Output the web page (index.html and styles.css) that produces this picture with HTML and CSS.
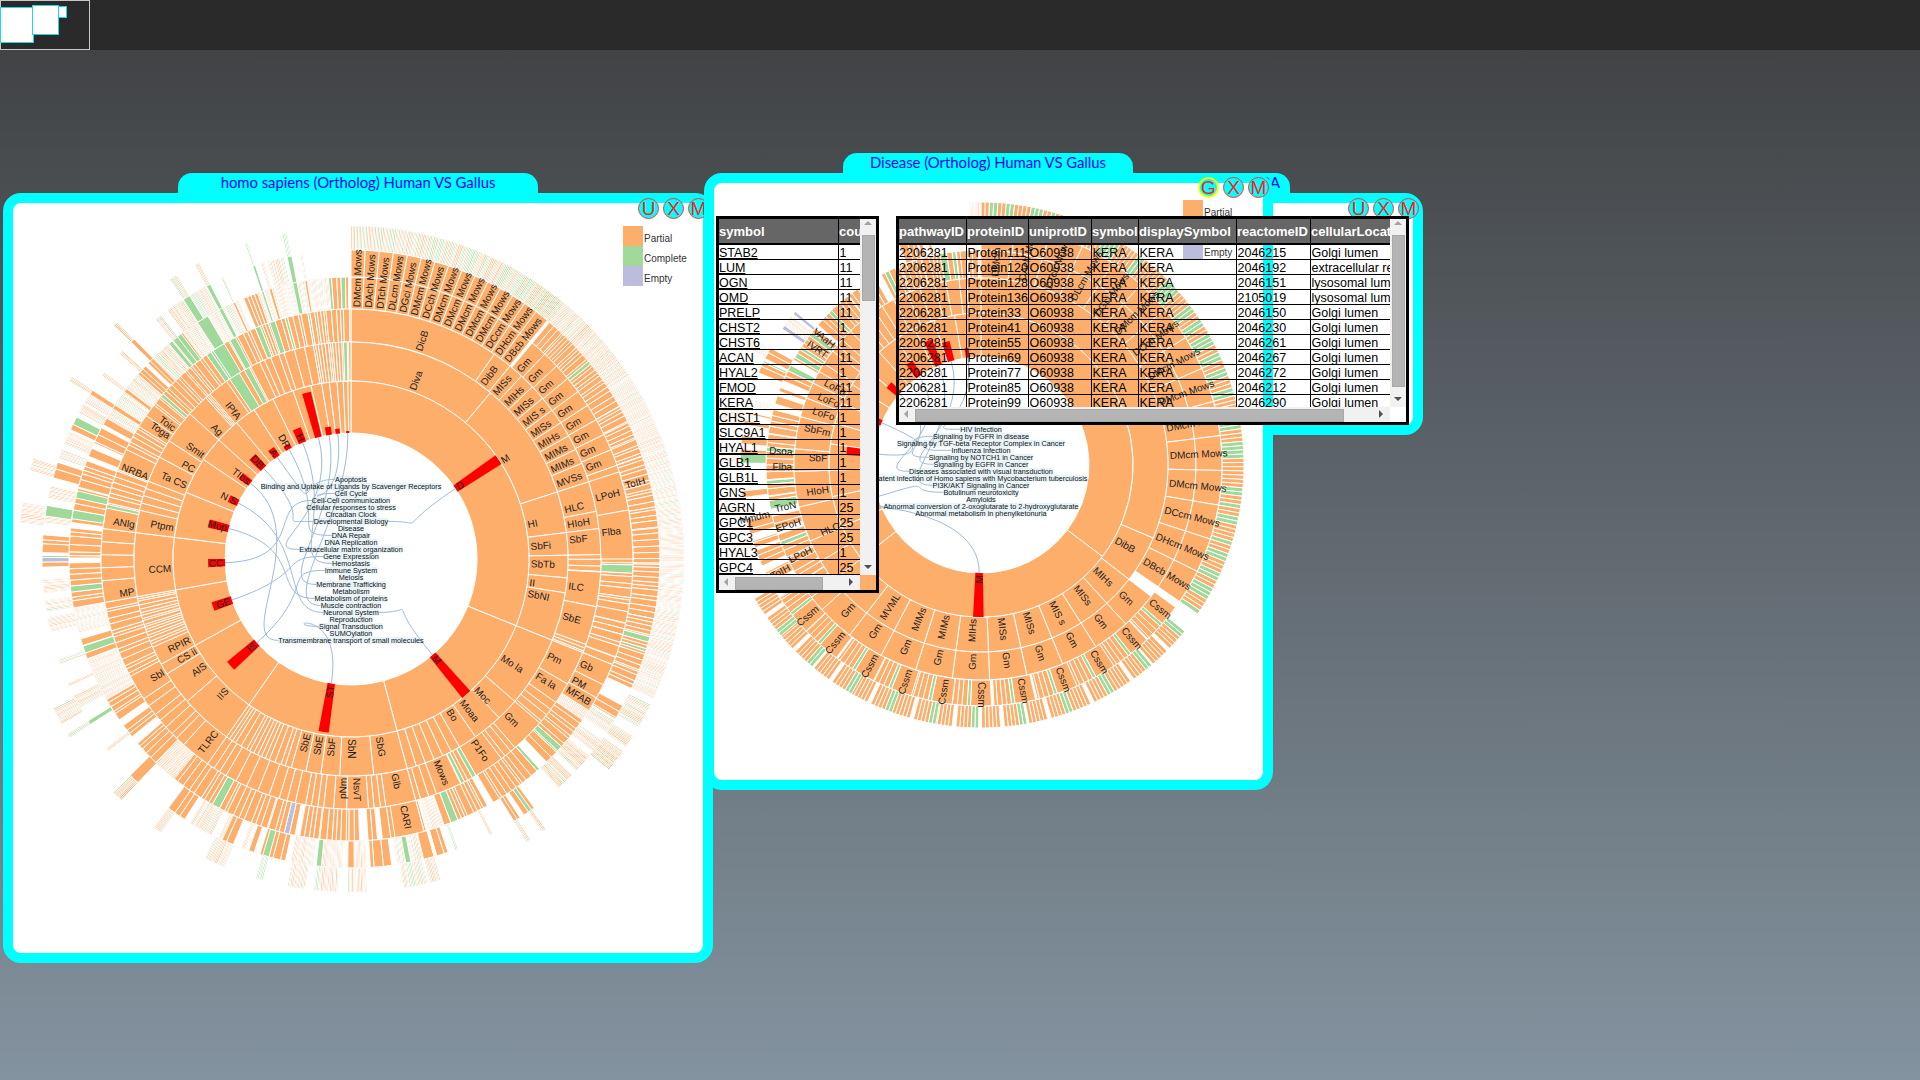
FILE: index.html
```html
<!DOCTYPE html>
<html lang="en">
<head>
<meta charset="utf-8">
<title>Pathway viewer</title>
<link rel="stylesheet" href="styles.css">
</head>
<body>
<header class="topbar">
  <div class="minimap">
    <div class="mini mini-a"></div>
    <div class="mini mini-b"></div>
    <div class="mini mini-c"></div>
  </div>
</header>
<main class="desktop">
  <section class="window win-one">
    <div class="tab tab-one">homo sapiens (Ortholog) Human VS Gallus</div>
    <svg class="chart" id="chart-one" width="690" height="750"></svg>
    <div class="controls"><span class="btn">U</span><span class="btn">X</span><span class="btn">M</span></div>
    <div class="legend legend-one">
      <div class="legend-row"><i class="swatch partial"></i><span>Partial</span></div>
      <div class="legend-row"><i class="swatch complete"></i><span>Complete</span></div>
      <div class="legend-row"><i class="swatch empty"></i><span>Empty</span></div>
    </div>
  </section>

  <section class="window win-three">
    <div class="tab tab-three">Human VS RA</div>
    <div class="controls"><span class="btn">U</span><span class="btn">X</span><span class="btn">M</span></div>
  </section>

  <section class="window win-two">
    <div class="tab tab-two">Disease (Ortholog) Human VS Gallus</div>
    <svg class="chart" id="chart-two" width="549" height="597"></svg>
    <div class="controls"><span class="btn btn-active">G</span><span class="btn">X</span><span class="btn">M</span></div>
    <div class="legend legend-two">
      <div class="legend-row"><i class="swatch partial"></i><span>Partial</span></div>
      <div class="legend-row"><i class="swatch complete"></i><span>Complete</span></div>
      <div class="legend-row"><i class="swatch empty"></i><span>Empty</span></div>
    </div>
  </section>

  <section class="datatable table-one">
    <div class="viewport">
      <table class="grid">
        <thead><tr><th>symbol</th><th>count</th></tr></thead>
        <tbody>
          <tr><td><u>STAB2</u></td><td>1</td></tr>
          <tr><td><u>LUM</u></td><td>11</td></tr>
          <tr><td><u>OGN</u></td><td>11</td></tr>
          <tr><td><u>OMD</u></td><td>11</td></tr>
          <tr><td><u>PRELP</u></td><td>11</td></tr>
          <tr><td><u>CHST2</u></td><td>1</td></tr>
          <tr><td><u>CHST6</u></td><td>1</td></tr>
          <tr><td><u>ACAN</u></td><td>11</td></tr>
          <tr><td><u>HYAL2</u></td><td>1</td></tr>
          <tr><td><u>FMOD</u></td><td>11</td></tr>
          <tr><td><u>KERA</u></td><td>11</td></tr>
          <tr><td><u>CHST1</u></td><td>1</td></tr>
          <tr><td><u>SLC9A1</u></td><td>1</td></tr>
          <tr><td><u>HYAL1</u></td><td>1</td></tr>
          <tr><td><u>GLB1</u></td><td>1</td></tr>
          <tr><td><u>GLB1L</u></td><td>1</td></tr>
          <tr><td><u>GNS</u></td><td>1</td></tr>
          <tr><td><u>AGRN</u></td><td>25</td></tr>
          <tr><td><u>GPC1</u></td><td>25</td></tr>
          <tr><td><u>GPC3</u></td><td>25</td></tr>
          <tr><td><u>HYAL3</u></td><td>1</td></tr>
          <tr><td><u>GPC4</u></td><td>25</td></tr>
        </tbody>
      </table>
    </div>
    <div class="vbar"><i class="arrow up"></i><b class="thumb-v"></b><s class="fill"></s><i class="arrow down"></i></div>
    <div class="hbar"><i class="arrow left"></i><b class="thumb-h"></b><s class="fill"></s><i class="arrow right"></i></div>
    <div class="corner"></div>
  </section>

  <section class="datatable table-two">
    <div class="viewport">
      <table class="grid">
        <thead><tr><th>pathwayID</th><th>proteinID</th><th>uniprotID</th><th>symbol</th><th>displaySymbol</th><th>reactomeID</th><th>cellularLocation</th></tr></thead>
        <tbody>
          <tr><td>2206281</td><td>Protein111</td><td>O60938</td><td>KERA</td><td>KERA</td><td>2046215</td><td>Golgi lumen</td></tr>
          <tr><td>2206281</td><td>Protein120</td><td>O60938</td><td>KERA</td><td>KERA</td><td>2046192</td><td>extracellular region</td></tr>
          <tr><td>2206281</td><td>Protein128</td><td>O60938</td><td>KERA</td><td>KERA</td><td>2046151</td><td>lysosomal lumen</td></tr>
          <tr><td>2206281</td><td>Protein136</td><td>O60938</td><td>KERA</td><td>KERA</td><td>2105019</td><td>lysosomal lumen</td></tr>
          <tr><td>2206281</td><td>Protein33</td><td>O60938</td><td>KERA</td><td>KERA</td><td>2046150</td><td>Golgi lumen</td></tr>
          <tr><td>2206281</td><td>Protein41</td><td>O60938</td><td>KERA</td><td>KERA</td><td>2046230</td><td>Golgi lumen</td></tr>
          <tr><td>2206281</td><td>Protein55</td><td>O60938</td><td>KERA</td><td>KERA</td><td>2046261</td><td>Golgi lumen</td></tr>
          <tr><td>2206281</td><td>Protein69</td><td>O60938</td><td>KERA</td><td>KERA</td><td>2046267</td><td>Golgi lumen</td></tr>
          <tr><td>2206281</td><td>Protein77</td><td>O60938</td><td>KERA</td><td>KERA</td><td>2046272</td><td>Golgi lumen</td></tr>
          <tr><td>2206281</td><td>Protein85</td><td>O60938</td><td>KERA</td><td>KERA</td><td>2046212</td><td>Golgi lumen</td></tr>
          <tr><td>2206281</td><td>Protein99</td><td>O60938</td><td>KERA</td><td>KERA</td><td>2046290</td><td>Golgi lumen</td></tr>
        </tbody>
      </table>
    </div>
    <div class="vbar"><i class="arrow up"></i><b class="thumb-v"></b><s class="fill"></s><i class="arrow down"></i></div>
    <div class="hbar"><i class="arrow left"></i><b class="thumb-h"></b><s class="fill"></s><i class="arrow right"></i></div>
    <div class="corner"></div>
  </section>
</main>
<script src="script.js"></script>
</body>
</html>
```
FILE: styles.css
```css
* { box-sizing: border-box; }
html, body { margin: 0; height: 100%; }
body {
  display: flex;
  flex-direction: column;
  height: 1080px;
  overflow: hidden;
  font-family: "Liberation Sans", Arial, sans-serif;
  background: linear-gradient(#414345 50px, #83939f 1080px);
}
.topbar { flex: 0 0 50px; background: #2a2a2a; display: flex; }
.minimap { position: relative; width: 90px; height: 50px; border: 1px solid #c8c8c8; }
.mini { position: absolute; background: #fff; border: 1px solid #19dcdc; }
.mini-a { left: -1px; top: 6px; width: 34px; height: 36px; }
.mini-b { left: 31px; top: 4px; width: 27px; height: 30px; }
.mini-c { left: 57px; top: 5px; width: 9px; height: 12px; }

.desktop { position: relative; flex: 1; }

.window { position: absolute; background: #fff; border: 10px solid #0ff; border-radius: 18px; }
.win-one { left: 3px; top: 143px; width: 710px; height: 770px; }
.win-two { left: 704px; top: 123px; width: 569px; height: 617px; }
.win-three { left: 900px; top: 143px; width: 523px; height: 242px; }

.tab {
  position: absolute;
  top: -30px;
  height: 21px;
  background: #0ff;
  border-radius: 14px 14px 0 0;
  color: #00f;
  font: 14.8px/19px Lato, "Open Sans", sans-serif;
  text-align: center;
  white-space: nowrap;
}
.tab-one { left: 165px; width: 360px; }
.tab-two { left: 129px; width: 290px; }
.tab-three { left: 180px; width: 200px; text-align: right; padding-right: 10px; }

.chart { position: absolute; left: 0; top: 0; }
.seg { stroke: #fff; stroke-width: 1; }
.c-o { fill: #fdae6b; }
.c-g { fill: #a1d99b; }
.c-l { fill: #bcbddc; }
.c-r { fill: #f00; stroke: none; }
.lab { font: 10px "Liberation Sans", Arial, sans-serif; fill: #222; }
.link { fill: none; stroke: #9dbbd8; stroke-width: 1; }
.name-bg { fill: #add8e6; opacity: 0.28; }
.name { font: 7.27px "Liberation Sans", Arial, sans-serif; fill: #111; text-anchor: middle; }

.controls { position: absolute; top: -5px; right: -6px; display: flex; gap: 4px; }
.win-two .controls { top: -6px; }
.btn {
  width: 21px;
  height: 21px;
  border: 1px solid #f33;
  border-radius: 50%;
  background: #0ff;
  color: #f22;
  font-size: 19px;
  line-height: 19px;
  text-align: center;
  overflow: hidden;
}
.btn-active { border: 2px solid #ff0; line-height: 17px; }

.legend { position: absolute; font-size: 10px; color: #333; }
.legend-one { left: 610px; top: 23px; }
.legend-two { left: 469px; top: 17px; }
.legend-row { display: flex; align-items: center; gap: 1px; height: 20px; }
.legend-row span { padding-top: 4px; }
.swatch { width: 20px; height: 20px; }
.partial { background: #fdae6b; }
.complete { background: #a1d99b; }
.empty { background: #bcbddc; }

.datatable {
  position: absolute;
  display: grid;
  grid-template-columns: 1fr 16px;
  grid-template-rows: 1fr 15px;
  border: 3px solid #000;
}
.table-one { left: 716px; top: 166px; width: 163px; height: 377px; }
.table-two { left: 896px; top: 166px; width: 513px; height: 209px; }
.viewport { overflow: hidden; min-width: 0; min-height: 0; }

.grid {
  border-collapse: separate;
  border-spacing: 0;
  table-layout: fixed;
  color: #000;
  font-size: 12.5px;
}
.table-one .grid { width: 160px; }
.table-two .grid { width: 530px; }
.grid th {
  height: 26px;
  padding: 0;
  background: #666;
  color: #fff;
  font-size: 13px;
  text-align: left;
  white-space: nowrap;
  overflow: hidden;
  border-right: 1px solid #000;
  border-bottom: 2px solid #000;
}
.grid td {
  height: 15px;
  padding: 2px 0 0 0;
  line-height: 12px;
  white-space: nowrap;
  border-right: 1px solid #000;
  border-bottom: 1px solid #000;
}
.grid td + td { padding-left: 0.5px; }
.table-one th:nth-child(1) { width: 120px; }
.table-one th:nth-child(2) { width: 40px; }
.table-two th:nth-child(1) { width: 68px; }
.table-two th:nth-child(2) { width: 62px; }
.table-two th:nth-child(3) { width: 63px; }
.table-two th:nth-child(4) { width: 47px; }
.table-two th:nth-child(5) { width: 98px; }
.table-two th:nth-child(6) { width: 74px; }
.table-two th:nth-child(7) { width: 118px; }

.vbar, .hbar { display: flex; background: #f1f1f1; }
.vbar { flex-direction: column; align-items: flex-end; }
.hbar { align-items: center; }
.fill { flex: 1; }
.thumb-v { width: 13px; margin-right: 1px; background: #b4b4b4; border: 1px solid #a8a8a8; }
.thumb-h { height: 13px; margin-top: 1px; background: #b4b4b4; border: 1px solid #a8a8a8; }
.table-one .thumb-v { height: 66px; }
.table-two .thumb-v { height: 152px; }
.table-one .thumb-h { width: 88px; }
.table-two .thumb-h { width: 429px; }
.arrow { position: relative; flex: 0 0 16px; width: 16px; height: 16px; }
.hbar .arrow { height: 15px; }
.arrow::after { content: ""; position: absolute; left: 4px; top: 5px; border: 4px solid transparent; }
.arrow.up::after { top: 2px; border-top: 0; border-bottom-color: #a3a3a3; }
.arrow.down::after { top: 6px; border-bottom: 0; border-top-color: #505050; }
.arrow.left::after { left: 5px; top: 3px; border-left: 0; border-right-color: #a3a3a3; }
.arrow.right::after { left: 5px; top: 3px; border-right: 0; border-left-color: #505050; }
.corner { background: transparent; }
```
FILE: script.js
```js
(function () {
  var NS = "http://www.w3.org/2000/svg";

  function rng(seed) {
    return function () {
      seed |= 0; seed = seed + 0x6D2B79F5 | 0;
      var t = Math.imul(seed ^ seed >>> 15, 1 | seed);
      t = t + Math.imul(t ^ t >>> 7, 61 | t) ^ t;
      return ((t ^ t >>> 14) >>> 0) / 4294967296;
    };
  }

  function Sunburst(id, cx, cy, R, seed) {
    var svg = document.getElementById(id);
    var rand = rng(seed);
    var rad = Math.PI / 180;
    function el(name, attrs, text) {
      var e = document.createElementNS(NS, name);
      for (var k in attrs) e.setAttribute(k, attrs[k]);
      if (text) e.textContent = text;
      svg.appendChild(e);
      return e;
    }
    function pt(r, a) {
      return (cx + r * Math.sin(a * rad)).toFixed(2) + " " + (cy - r * Math.cos(a * rad)).toFixed(2);
    }
    function arcPath(r0, r1, a0, a1) {
      var big = a1 - a0 > 180 ? 1 : 0;
      return "M" + pt(r0, a0) + "A" + r0 + " " + r0 + " 0 " + big + " 1 " + pt(r0, a1) +
        "L" + pt(r1, a1) + "A" + r1 + " " + r1 + " 0 " + big + " 0 " + pt(r1, a0) + "Z";
    }
    var api = {
      rand: rand,
      seg: function (k, a0, a1, c) {
        if (a1 <= a0) return;
        el("path", { "class": "seg c-" + (c || "o"), d: arcPath(R[k], R[k + 1], a0, a1) });
      },
      bounds: function (k, list) {
        for (var i = 0; i < list.length - 1; i++) api.seg(k, list[i], list[i + 1], "o");
      },
      color: function (pg, pl) {
        var r = rand();
        return r < pg ? "g" : (r < pg + (pl || 0) ? "l" : "o");
      },
      hatch: function (k, a0, a1, wmin, wmax, pg, pl, skip) {
        var a = a0;
        while (a < a1) {
          var w = wmin + rand() * (wmax - wmin);
          if (!skip || rand() > skip) api.seg(k, a, Math.min(a + w, a1), api.color(pg, pl));
          a += w;
        }
      },
      spike: function (a, w, from, to, c) {
        for (var k = from; k <= to; k++) {
          if (k === to) api.hatch(k, a - w / 2, a + w / 2, 0.2, 0.28, c === "g" ? 0.7 : 0.1, 0);
          else api.seg(k, a - w / 2, a + w / 2, c);
        }
      },
      spiky: function (A0, A1, cfg) {
        var a = A0;
        while (a < A1) {
          var g = Math.min(cfg.gmin + rand() * (cfg.gmax - cfg.gmin), A1 - a);
          var x = rand(), d = cfg.start;
          if (x > cfg.p[0]) d = cfg.start + 1;
          if (x > cfg.p[1]) d = cfg.start + 2;
          for (var k = cfg.start; k <= d; k++) {
            var b0 = a, b1 = a + g;
            if (k > cfg.start) {
              if (rand() < cfg.skip) continue;
              b0 = a + rand() * g * 0.3;
              b1 = a + g - rand() * g * 0.3;
            }
            var pale = k >= cfg.top || rand() < (k === cfg.start ? cfg.paleIn : cfg.pale);
            if (pale) api.hatch(k, b0, b1, 0.18, 0.28, cfg.green + 0.1, 0.02);
            else api.hatch(k, b0, b1, cfg.wmin, cfg.wmax, cfg.green, 0.01, 0.12);
          }
          a += g;
        }
      },
      labels: function (list) {
        list.forEach(function (l) {
          var k = l[0], a = l[1], r = R[k] + 2, flip = a > 180;
          var rot = flip ? a + 90 : a - 90;
          var p = pt(r, a).split(" ");
          el("text", {
            "class": "lab",
            x: p[0], y: p[1], dy: "0.35em",
            "text-anchor": flip ? "end" : "start",
            transform: "rotate(" + rot.toFixed(1) + " " + p[0] + " " + p[1] + ")"
          }, l[2]);
        });
      },
      red: function (list) {
        list.forEach(function (b) {
          el("path", { "class": "c-r", d: arcPath(R[0], b[2], b[0] - b[1] / 2, b[0] + b[1] / 2) });
        });
      },
      names: function (list, y0, links) {
        var r0 = R[0];
        function textY(i) { return y0 + 7 * i; }
        var layer = [];
        list.forEach(function (t, i) {
          var e = document.createElementNS(NS, "text");
          e.setAttribute("class", "name");
          e.setAttribute("x", cx);
          e.setAttribute("y", textY(i) + 2.4);
          e.textContent = t;
          layer.push(e);
        });
        var widths = [];
        layer.forEach(function (e) { svg.appendChild(e); widths.push(e.getComputedTextLength()); svg.removeChild(e); });
        links.forEach(function (l) {
          var a = l[0], i = l[1], side = l[2];
          var sx = cx + r0 * Math.sin(a * rad), sy = cy - r0 * Math.cos(a * rad);
          var tx = cx + side * widths[i] / 2, ty = textY(i);
          var mx = cx + (sx - cx) * 0.35, my = cy + (sy - cy) * 0.35;
          el("path", {
            "class": "link",
            d: "M" + sx.toFixed(1) + " " + sy.toFixed(1) + "C" + mx.toFixed(1) + " " + my.toFixed(1) +
              " " + (tx + side * 45).toFixed(1) + " " + ty.toFixed(1) + " " + tx.toFixed(1) + " " + ty.toFixed(1)
          });
        });
        layer.forEach(function (e, i) {
          el("rect", { "class": "name-bg", x: (cx - widths[i] / 2).toFixed(1), y: textY(i) - 3.5, width: widths[i].toFixed(1), height: 7 });
          svg.appendChild(e);
        });
      }
    };
    return api;
  }

  var MOWS = ["DMcm Mows", "DAch Mows", "DTch Mows", "DLcm Mows", "DGci Mows", "DMcm Mows", "DCch Mows", "DMcm Mows",
    "DMcm Mows", "DMcm Mows", "DMcm Mows", "DMcm Mows", "DCcm Mows", "DHcm Mows", "DBcb Mows"];

  /* ---------- left chart: homo sapiens ---------- */
  (function () {
    var c = Sunburst("chart-one", 338, 356, [126, 178, 217, 250, 282, 309, 333], 11);
    var i;
    /* outer fillers */
    c.hatch(5, 0, 40, 0.22, 0.3, 0.5, 0);
    for (i = 40; i < 112; i += 3.4) {
      c.hatch(4, i, i + 3.4, 0.5, 1.3, 0.02, 0);
      c.hatch(5, i, i + 3.4, 0.16, 0.24, 0.15, 0);
    }
    for (i = 72; i < 112; i += 2.4) c.hatch(3, i, i + 2.4, 0.8, 2.4, 0.02, 0);
    c.spiky(112, 165, { start: 3, top: 5, p: [0.12, 0.55], gmin: 3, gmax: 6, wmin: 0.7, wmax: 1.6, pale: 0.7, paleIn: 0.25, skip: 0.2, green: 0.08 });
    c.spiky(165, 215, { start: 3, top: 5, p: [0.1, 0.55], gmin: 3, gmax: 7, wmin: 0.8, wmax: 1.8, pale: 0.7, paleIn: 0.2, skip: 0.2, green: 0.06 });
    c.spiky(215, 260, { start: 3, top: 4, p: [0.3, 0.85], gmin: 2.5, gmax: 6, wmin: 0.7, wmax: 1.6, pale: 0.75, paleIn: 0.3, skip: 0.3, green: 0.06 });
    c.spiky(260, 300, { start: 3, top: 5, p: [0.05, 0.8], gmin: 2.5, gmax: 5, wmin: 0.7, wmax: 1.8, pale: 0.45, paleIn: 0.15, skip: 0.15, green: 0.06 });
    c.spiky(300, 360, { start: 3, top: 4, p: [0.6, 0.92], gmin: 2, gmax: 4.5, wmin: 0.6, wmax: 1.3, pale: 0.8, paleIn: 0.6, skip: 0.4, green: 0.2 });

    /* long thin spokes */
    [[341.7, 0.5, 3, 5, "g"], [332.5, 0.8, 3, 5, "g"], [348.5, 0.9, 3, 5, "g"], [327.8, 1.4, 3, 5, "g"], [315, 0.8, 3, 5, "o"], [350.8, 0.5, 3, 4, "o"],
      [335.5, 0.5, 3, 4, "o"], [302.7, 0.9, 3, 5, "o"], [306.8, 0.8, 3, 4, "o"], [312, 0.8, 3, 4, "o"], [321.5, 1.3, 3, 4, "g"], [353.7, 0.8, 3, 3, "g"], [343.4, 0.6, 3, 4, "o"],
      [147.8, 0.7, 4, 5, "o"], [144.6, 0.7, 4, 5, "g"], [153, 0.5, 4, 4, "o"], [160, 0.5, 4, 4, "g"], [165.4, 2, 4, 5, "o"], [169.3, 1, 4, 5, "g"],
      [180, 1.2, 4, 5, "o"], [186, 1, 4, 5, "g"], [196, 1.2, 4, 5, "g"], [200.4, 0.8, 4, 4, "o"], [205, 0.7, 4, 4, "o"], [211, 0.7, 4, 4, "o"],
      [215.5, 1.5, 4, 5, "o"], [224.6, 2, 4, 5, "o"], [232, 0.7, 4, 4, "o"], [238, 0.8, 4, 5, "g"], [246, 0.5, 4, 4, "o"], [250.7, 1, 4, 4, "g"]].forEach(function (s) {
      c.spike(s[0], s[1], s[2], s[3], s[4]);
    });

    /* ring 3 and 4: the Mows slices of the first quadrant */
    for (i = 0; i < 15; i++) {
      c.seg(3, i * 2.63, (i + 1) * 2.63);
      c.seg(4, i * 2.63, (i + 1) * 2.63);
    }
    for (i = 40; i < 72; i += 3.4) c.seg(3, i, i + 3.4);

    /* ring 2 */
    c.bounds(2, [0, 35, 39.5, 43, 46.5, 50, 53.5, 57, 60.5, 64, 67.5, 72, 79, 83, 89]);
    c.hatch(2, 89, 93, 1, 2, 0);
    c.bounds(2, [93, 101, 110]);
    c.hatch(2, 110, 112, 0.7, 1, 0);
    c.bounds(2, [112, 120, 125]);
    c.hatch(2, 125, 131, 1, 2, 0);
    c.bounds(2, [131, 139]);
    c.hatch(2, 139, 143, 1, 2, 0);
    c.bounds(2, [143, 150]);
    c.hatch(2, 150, 154, 0.8, 1.5, 0.3);
    c.bounds(2, [154, 160]);
    c.hatch(2, 160, 165, 1, 2, 0);
    c.bounds(2, [165, 172]);
    c.hatch(2, 172, 176, 1, 2, 0);
    c.bounds(2, [176, 181, 184]);
    c.hatch(2, 184, 215, 1.2, 2.8, 0);
    c.bounds(2, [215, 222]);
    c.hatch(2, 222, 236, 1.2, 2.6, 0);
    c.bounds(2, [236, 242]);
    c.hatch(2, 242, 260, 0.6, 1.8, 0);
    c.bounds(2, [260, 265, 268, 271, 274, 277, 283]);
    c.hatch(2, 283, 291, 0.7, 1.6, 0.06);
    c.bounds(2, [291, 296]);
    c.hatch(2, 296, 302, 0.7, 1.4, 0);
    c.bounds(2, [302, 305, 308]);
    c.hatch(2, 308, 360, 0.5, 1.6, 0.1);

    /* ring 3 labelled slices */
    c.bounds(3, [72, 80, 90]);
    c.bounds(3, [112, 116.5, 119.5, 122.5]);
    c.bounds(3, [165, 171]);

    /* ring 1 */
    c.bounds(1, [0, 40, 72, 83, 89, 95, 99, 112, 131, 137, 145, 150, 152.5, 155, 157.5, 160, 162.5, 165, 174, 183, 188, 192, 196]);
    c.hatch(1, 196, 215, 0.9, 1.8, 0);
    c.bounds(1, [215, 229, 238, 241, 246]);
    c.hatch(1, 246, 260, 0.5, 1.1, 0);
    c.bounds(1, [260, 277, 283, 285, 287, 289, 291, 298, 303, 312, 318]);
    c.hatch(1, 318, 319.5, 0.4, 0.6, 0);
    c.bounds(1, [319.5, 325]);
    c.hatch(1, 325, 350, 1.2, 3, 0.05);
    c.hatch(1, 350, 360, 0.5, 1, 0.05);

    /* ring 0 */
    c.bounds(0, [0, 112, 165, 215, 241, 260, 277, 292, 304, 312, 320, 327, 334, 341, 347, 350.5, 353, 355.5, 357.5, 359, 360]);

    /* strong green slices */
    [[1, 326, 329], [1, 330.5, 332], [2, 326.5, 329.5], [2, 331, 332.5], [3, 327, 329.5], [3, 322, 323], [2, 341, 342.3], [1, 358, 359],
      [4, 278, 280], [3, 278.2, 280], [3, 282.5, 284], [2, 281.8, 282.6], [3, 250.5, 252]].forEach(function (g) {
      c.seg(g[0], g[1], g[2], "g");
    });

    c.red([[56, 3.4, 178], [139.6, 3.4, 178], [189, 3.4, 175], [228.4, 3.8, 161], [251, 3.5, 146], [268.3, 3.3, 143], [284, 3.3, 146],
      [296.4, 3, 136], [307, 3, 138], [316, 3.5, 142], [324, 3, 136], [330.5, 3, 131], [337.4, 3.5, 141], [345, 3, 172],
      [350, 2.6, 134], [354, 2, 131], [358.5, 1.4, 128]]);

    var L = [[0, 56, "D"], [0, 139.6, "M"], [0, 189, "ST"], [0, 228.4, "IS"], [0, 251, "GE"], [0, 268.3, "CC"], [0, 284, "Mop"],
      [0, 296.4, "N S"], [0, 307, "TIos"], [0, 316, "DB"], [0, 324, "A"], [0, 330.5, "DR"], [0, 337.4, "H"]];
    L = L.concat([[1, 20, "Diva"], [1, 57, "M"], [1, 79, "HI"], [1, 86, "SbFi"], [1, 91.5, "SbTb"], [1, 97.5, "II"], [1, 101, "SbNI"],
      [1, 123, "Mo la"], [1, 136, "Moc"], [1, 142, "Moaa"], [1, 147, "Bo"], [1, 171, "SbG"], [1, 180, "SbN"], [1, 186, "SbF"], [1, 190, "SbE"], [1, 194, "SbE"],
      [1, 223.6, "IIS"], [1, 234, "AIS"], [1, 239.5, "CS ii"], [1, 243.5, "RPIR"], [1, 267, "CCM"], [1, 280, "Ptpm"], [1, 294, "Ta CS"], [1, 299.6, "PC"], [1, 305, "Smit"], [1, 314, "Ag"], [1, 321.6, "IPfA"]]);
    L = L.concat([[2, 18, "DicB"], [2, 37, "DibB"], [2, 41, "MISs"], [2, 45, "MIHs"], [2, 48.5, "MISs"], [2, 52, "MIS s"], [2, 55.5, "MISs"], [2, 59, "MIHs"], [2, 62.5, "MIMs"], [2, 66, "MIMs"], [2, 70, "MVSs"],
      [2, 77, "HLC"], [2, 81, "HIoH"], [2, 85, "SbF"], [2, 97, "ILC"], [2, 105, "SbE"], [2, 116, "Pm"], [2, 122, "Fa la"], [2, 135, "Gm"], [2, 146, "P1Fo"], [2, 157, "Mows"], [2, 168.5, "Glb"], [2, 178.5, "NsvT"], [2, 182, "pNm"],
      [2, 218, "TLRC"], [2, 239, "Sbl"], [2, 261.5, "MP"], [2, 279, "ANlg"], [2, 292, "NRBA"], [2, 304, "Toga"], [2, 306.4, "Toic"]]);
    MOWS.forEach(function (m, n) { L.push([3, (n + 0.5) * 2.63, m]); });
    for (i = 0; i < 9; i++) L.push([3, 41.7 + i * 3.4, "Gm"]);
    L = L.concat([[3, 76, "LPoH"], [3, 84, "Flba"], [3, 114.4, "Gb"], [3, 118.5, "PM"], [3, 121, "MFAB"], [3, 168, "CARI"], [4, 75, "ToIH"]]);
    c.labels(L);

    var names = ["Apoptosis", "Binding and Uptake of Ligands by Scavenger Receptors", "Cell Cycle", "Cell-Cell communication", "Cellular responses to stress",
      "Circadian Clock", "Developmental Biology", "Disease", "DNA Repair", "DNA Replication", "Extracellular matrix organization", "Gene Expression",
      "Hemostasis", "Immune System", "Meiosis", "Membrane Trafficking", "Metabolism", "Metabolism of proteins", "Muscle contraction", "Neuronal System",
      "Reproduction", "Signal Transduction", "SUMOylation", "Transmembrane transport of small molecules"];
    c.names(names, 276.4, [[56, 6, 1], [139.6, 19, 1], [189, 21, -1], [228.4, 13, -1], [251, 11, -1], [268.3, 3, -1], [284, 17, -1], [296.4, 19, -1],
      [307, 23, -1], [316, 6, -1], [324, 0, -1], [330.5, 8, -1], [337.4, 12, -1], [345, 10, -1], [350, 15, -1], [354, 2, -1], [358.5, 18, -1]]);
  })();

  /* ---------- middle chart: Disease ---------- */
  (function () {
    var c = Sunburst("chart-two", 267, 282, [108, 152, 187, 215, 241, 263], 29);
    var i, j;
    /* outermost ring of the Mows slices: thin bands in runs of one colour */
    for (i = 0; i < 15; i++) {
      var col = "g", run = 0;
      for (j = 0; j < 9; j++) {
        if (run === 0) { col = col === "g" ? "o" : "g"; run = 2 + Math.floor(c.rand() * 3); }
        c.seg(4, i * 8.3 + j * 0.922, i * 8.3 + (j + 1) * 0.922, col);
        run--;
      }
    }
    c.spiky(232, 300, { start: 2, top: 4, p: [0.2, 0.6], gmin: 3, gmax: 6, wmin: 1, wmax: 2.4, pale: 0.2, paleIn: 0, skip: 0.1, green: 0.1 });
    c.spiky(300, 360, { start: 2, top: 4, p: [0.4, 0.8], gmin: 3, gmax: 6, wmin: 0.8, wmax: 2, pale: 0.3, paleIn: 0.05, skip: 0.15, green: 0.1 });

    /* rings 2-3 of the Mows slices */
    for (i = 0; i < 15; i++) {
      c.seg(2, i * 8.3, (i + 1) * 8.3);
      c.seg(3, i * 8.3, (i + 1) * 8.3);
    }

    /* Cssm groups */
    var cssm = [128.7, 139, 149, 159, 169.4, 180, 189.4, 199.3, 209, 219.4, 229];
    cssm.forEach(function (a) {
      var s = a - 2.5;
      c.seg(3, s, a + 2.5);
      c.seg(3, a + 2.5, a + 3.3, "g");
      c.hatch(3, a + 3.3, s + 10, 1.1, 1.3, 0);
      for (var n = 0; n < 12; n++) {
        if (n === 6) continue;
        c.seg(4, s + 3 + n * 0.83, s + 3 + (n + 1) * 0.83, n < 2 ? "g" : "o");
      }
    });

    /* ring 2 Gm */
    for (i = 0; i < 10; i++) c.seg(2, 127.7 + i * 10, 137.7 + i * 10);
    c.seg(2, 227.7, 232);

    /* ring 1 */
    c.bounds(1, [0, 113, 127.7, 137.7, 147.7, 157.7, 167.7, 177.7, 187.7, 197.7, 207.7, 217.7, 232, 239, 246, 257, 268, 275, 285, 291, 296, 300]);
    c.hatch(1, 300, 360, 2, 5, 0);

    /* ring 0 */
    c.bounds(0, [0, 127, 232, 246, 258, 268, 278, 286, 294, 302, 310, 318, 326, 334, 342, 350, 360]);

    [[3, 308.8, 309.6], [3, 304.4, 305.4]].forEach(function (g) { c.seg(g[0], g[1], g[2], "l"); });

    c.red([[181, 4, 152], [276, 3.5, 135], [293, 3, 120], [311, 3.5, 122], [325, 3.5, 125], [337, 3.5, 135], [344, 3.5, 128], [353, 2, 118], [253, 2, 113]]);

    var L = [[0, 181, "M"], [0, 276, "S"],
      [1, 119, "DibB"], [1, 132.5, "MIHs"], [1, 142, "MISs"], [1, 152.6, "MIS s"], [1, 163, "MISs"], [1, 172.5, "MISs"], [1, 183, "MIHs"], [1, 193, "MIMs"], [1, 202, "MIMs"], [1, 212.7, "MVML"],
      [1, 247, "HLC"], [1, 261, "HIoH"], [1, 272.5, "SbF"], [1, 282, "SbFm"], [1, 288, "LoFo"], [1, 293, "LoFo"], [1, 298, "LoFo"],
      [2, 243.6, "LPoH"], [2, 252.7, "EPoH"], [2, 258, "TroN"], [2, 269.5, "Flba"], [2, 274, "Dsoa"], [2, 305.3, "IVRT"], [2, 309, "VAaH"],
      [3, 242, "ToIH"], [3, 257, "Mmdm"]];
    MOWS.forEach(function (m, n) { L.push([2, (n + 0.5) * 8.3, m]); });
    for (i = 0; i < 10; i++) L.push([2, 132.5 + i * 10, "Gm"]);
    cssm.forEach(function (a) { L.push([3, a, "Cssm"]); });
    c.labels(L);

    var names = ["HIV Infection", "Signaling by FGFR in disease", "Signaling by TGF-beta Receptor Complex in Cancer", "Influenza Infection",
      "Signaling by NOTCH1 in Cancer", "Signaling by EGFR in Cancer", "Diseases associated with visual transduction",
      "Latent infection of Homo sapiens with Mycobacterium tuberculosis", "PI3K/AKT Signaling in Cancer", "Botulinum neurotoxicity", "Amyloids",
      "Abnormal conversion of 2-oxoglutarate to 2-hydroxyglutarate", "Abnormal metabolism in phenylketonuria"];
    c.names(names, 246.3, [[181, 11, -1], [276, 1, -1], [293, 3, -1], [311, 4, -1], [325, 6, -1], [337, 8, -1], [344, 5, -1], [353, 0, -1], [253, 9, -1]]);
  })();
})();
```
